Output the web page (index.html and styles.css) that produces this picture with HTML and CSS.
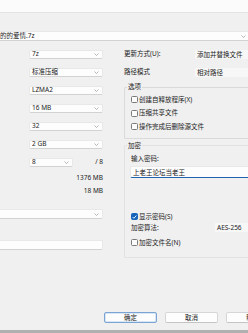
FILE: index.html
```html
<!DOCTYPE html>
<html lang="zh-CN">

<head>
    <meta charset="UTF-8" />
    <meta name="viewport" content="width=device-width" />
    <link rel="stylesheet" href="styles.css">
</head>

<body>
    <div class="titlebar"></div>

    <div class="path_row">
        <div class="combo path">
            <span class="path_text">的的爱情.7z</span>
            <svg class="chev" width="5" height="3" viewBox="0 0 5 3"><path d="M0.5 0.5l2 2 2-2" /></svg>
        </div>
    </div>

    <div class="content">
        <div class="left">
            <div class="row"><div class="combo">7z<svg class="chev" width="5" height="3" viewBox="0 0 5 3"><path d="M0.5 0.5l2 2 2-2" /></svg></div></div>
            <div class="row"><div class="combo">标准压缩<svg class="chev" width="5" height="3" viewBox="0 0 5 3"><path d="M0.5 0.5l2 2 2-2" /></svg></div></div>
            <div class="row"><div class="combo">LZMA2<svg class="chev" width="5" height="3" viewBox="0 0 5 3"><path d="M0.5 0.5l2 2 2-2" /></svg></div></div>
            <div class="row"><div class="combo">16 MB<svg class="chev" width="5" height="3" viewBox="0 0 5 3"><path d="M0.5 0.5l2 2 2-2" /></svg></div></div>
            <div class="row"><div class="combo">32<svg class="chev" width="5" height="3" viewBox="0 0 5 3"><path d="M0.5 0.5l2 2 2-2" /></svg></div></div>
            <div class="row"><div class="combo">2 GB<svg class="chev" width="5" height="3" viewBox="0 0 5 3"><path d="M0.5 0.5l2 2 2-2" /></svg></div></div>
            <div class="row">
                <div class="combo small">8<svg class="chev" width="5" height="3" viewBox="0 0 5 3"><path d="M0.5 0.5l2 2 2-2" /></svg></div>
                <span class="of">/ 8</span>
            </div>
            <div class="stat">1376 MB</div>
            <div class="stat">18 MB</div>
            <div class="combo wide"><svg class="chev" width="5" height="3" viewBox="0 0 5 3"><path d="M0.5 0.5l2 2 2-2" /></svg></div>
            <div class="field wide"></div>
        </div>

        <div class="right">
            <div class="prop">
                <span class="prop_label">更新方式(U):</span>
                <div class="value">添加并替换文件</div>
            </div>
            <div class="prop">
                <span class="prop_label">路径模式</span>
                <div class="value">相对路径</div>
            </div>

            <fieldset class="group options">
                <legend>选项</legend>
                <label class="check"><span class="box"></span>创建自释放程序(X)</label>
                <label class="check"><span class="box"></span>压缩共享文件</label>
                <label class="check"><span class="box"></span>操作完成后删除源文件</label>
            </fieldset>

            <fieldset class="group crypt">
                <legend>加密</legend>
                <div class="line">输入密码:</div>
                <div class="field password">上老王论坛当老王</div>
                <label class="check show"><span class="box on"><svg width="5" height="4" viewBox="0 0 5 4"><path d="M0.6 2l1.3 1.3 2.5-2.8" /></svg></span>显示密码(S)</label>
                <div class="algo">
                    <span class="algo_label">加密算法:</span>
                    <div class="value">AES-256</div>
                </div>
                <label class="check last"><span class="box"></span>加密文件名(N)</label>
            </fieldset>
        </div>
    </div>

    <div class="buttons">
        <button class="btn default">确定</button>
        <button class="btn">取消</button>
        <button class="btn">帮助</button>
    </div>
    <div class="bottom_band"></div>
</body>

</html>
```

FILE: styles.css
```css
/* === 7-zip add to archive dialog === */

* {
    box-sizing: border-box;
}

body {
    margin: 0;
    width: 248px;
    height: 333px;
    overflow: hidden;
    display: flex;
    flex-direction: column;
    background: #f0f0f0;
    color: #222;
    font-family: "Noto Sans", "Noto Sans CJK SC", sans-serif;
    font-size: 6.5px;
    line-height: 8px;
}

.titlebar {
    /* white strip on top */
    height: 13px;
    background: #fbfbfb;
    border-bottom: 1px solid #e4e4e4;
    flex-shrink: 0;
}

.path_row {
    margin-top: 18px;
    flex-shrink: 0;
}

.combo {
    /* drop down boxes */
    display: flex;
    align-items: center;
    justify-content: space-between;
    height: 9px;
    width: 74px;
    padding: 0 3px 0 2px;
    background: #fdfdfd;
    border: 1px solid #e8e8e8;
    border-bottom-color: #d2d2d2;
    border-radius: 2px;
    white-space: nowrap;
}

.chev {
    flex-shrink: 0;
    margin-left: auto;
}

.chev path {
    fill: none;
    stroke: #999;
    stroke-width: 0.7;
}

.path {
    width: 250px;
    height: 10px;
    padding-left: 0;
    border-left: none;
    border-radius: 0;
    overflow: hidden;
}

.content {
    display: flex;
    margin-top: 4px;
    flex-shrink: 0;
}

/* left column */

.left {
    width: 104px;
    flex-shrink: 0;
}

.row {
    display: flex;
    align-items: center;
    justify-content: space-between;
    height: 18px;
    padding-left: 29px;
    padding-right: 1px;
}

.combo.small {
    width: 44px;
}

.stat {
    height: 13px;
    line-height: 13px;
    text-align: right;
    padding-right: 1px;
}

.stat:first-of-type {
    margin-top: 5px;
}

.combo.wide {
    width: 103px;
    height: 10px;
    margin-top: 12px;
    border-left: none;
    border-radius: 0 2px 2px 0;
}

.field {
    background: #fdfdfd;
    border: 1px solid #e8e8e8;
    border-bottom-color: #d2d2d2;
    border-radius: 2px;
}

.field.wide {
    width: 103px;
    height: 10px;
    margin-top: 21px;
    border-left: none;
    border-radius: 0 2px 2px 0;
}

/* right column */

.right {
    margin-left: 19px;
    width: 140px;
    flex-shrink: 0;
}

.prop {
    display: flex;
    align-items: center;
    height: 18px;
    padding-left: 1px;
}

.prop_label {
    width: 71px;
}

.value {
    flex: 1;
    height: 9px;
    line-height: 9px;
    padding-left: 2px;
    background: #f7f7f7;
    white-space: nowrap;
}

.group {
    margin: 2px 0 0 1px;
    padding: 2px 6px 4px 6px;
    border: 1px solid #dadada;
    border-right: none;
    border-radius: 2px 0 0 2px;
    min-width: 0;
}

.group legend {
    padding: 0 1px;
    margin-left: -4px;
    line-height: 8px;
}

.check {
    display: flex;
    align-items: center;
    height: 13.5px;
    white-space: nowrap;
}

.box {
    /* checkbox square */
    display: flex;
    align-items: center;
    justify-content: center;
    width: 7px;
    height: 7px;
    margin-right: 1px;
    border: 1px solid #7a7a7a;
    border-radius: 1.5px;
    background: #fbfbfb;
    flex-shrink: 0;
}

.box.on {
    background: #1765bb;
    border-color: #1765bb;
}

.box.on path {
    fill: none;
    stroke: #fff;
    stroke-width: 0.9;
}

.crypt {
    margin-top: 3px;
    padding-top: 4px;
    padding-bottom: 8px;
    border-color: #e2e2e2;
}

.line {
    height: 10px;
    line-height: 10px;
}

.field.password {
    height: 12px;
    line-height: 11px;
    margin: 2px 0 0 -1px;
    padding-left: 2px;
    border-bottom: 1px solid #1f64b4;
    border-radius: 2px 0 0 2px;
    border-right: none;
}

.check.show {
    height: 12px;
    margin-top: 33px;
}

.algo {
    display: flex;
    align-items: center;
    height: 10px;
}

.algo_label {
    width: 84px;
}

.check.last {
    height: 12px;
    margin-top: 4px;
}

/* buttons */

.buttons {
    display: flex;
    gap: 8px;
    margin-top: auto;
    padding-left: 104px;
    flex-shrink: 0;
}

.btn {
    width: 53px;
    height: 11px;
    flex-shrink: 0;
    padding: 0;
    font-family: inherit;
    font-size: 6.5px;
    line-height: 9px;
    color: #222;
    background: #fdfdfd;
    border: 1px solid #d6d6d6;
    border-bottom-color: #c4c4c4;
    border-radius: 2px;
}

.btn.default {
    border: 1px solid #7aa4d4;
    box-shadow: inset 0 0 0 0.5px #b6cfe9;
}

.bottom_band {
    height: 3px;
    margin-top: 7px;
    background: #b0b0b0;
    flex-shrink: 0;
}
```
